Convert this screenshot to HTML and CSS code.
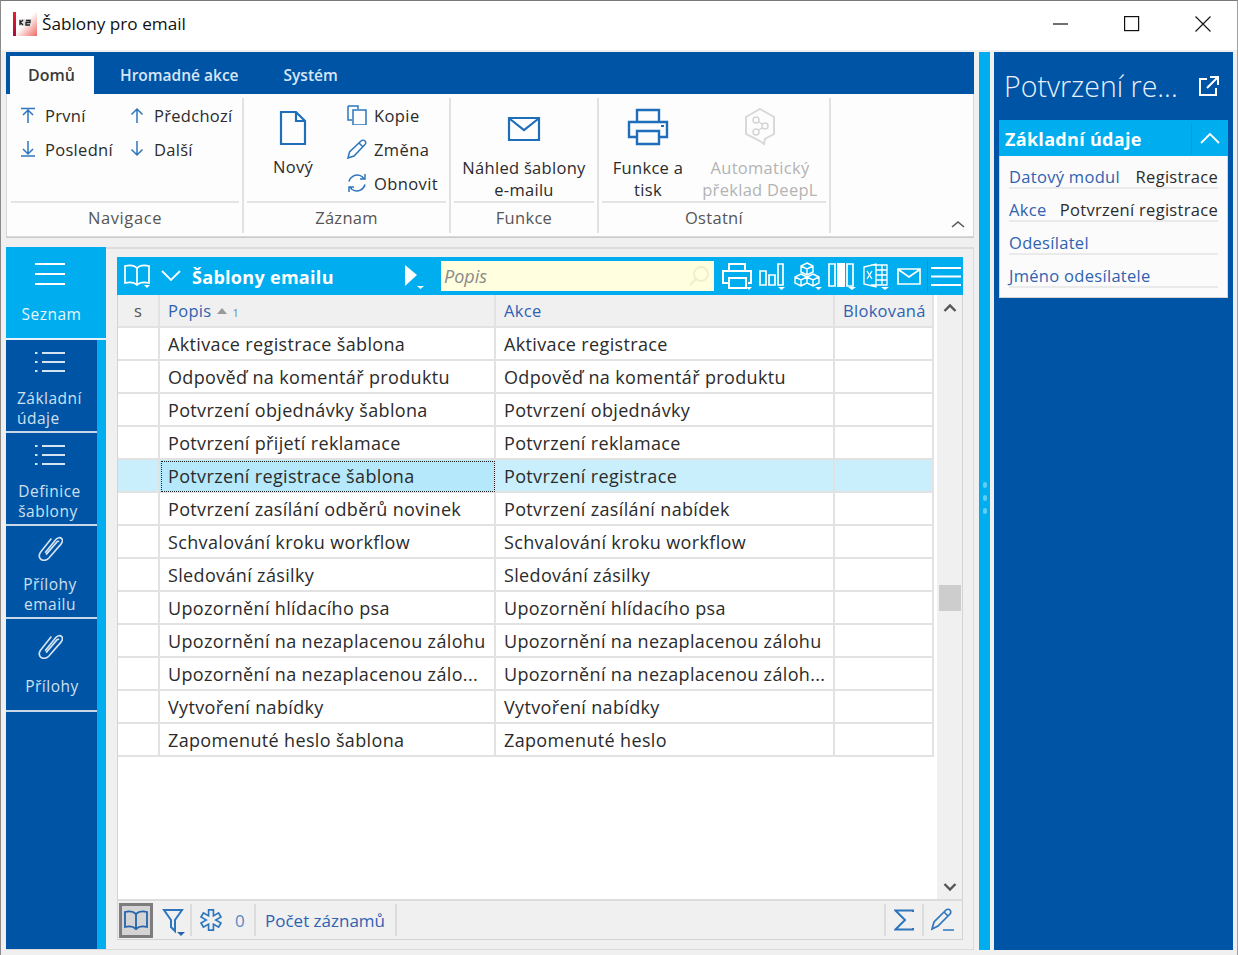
FILE: index.html
```html
<!DOCTYPE html>
<html lang="cs">
<head>
<meta charset="utf-8">
<title>Šablony pro email</title>
<link rel="stylesheet" href="styles.css">
</head>
<body>
<svg class="defs" width="0" height="0">
  <symbol id="clip" viewBox="0 0 28 30"><path d="M8 21 20 6c2-2.500 5-2.500 6.500-1s1 4-1 6.500L12 27c-3 3-7 3-9 1s-2-5 0-8L15 5M9 23 21 9c1-1.200 2-1.200 2.500-.5" fill="none" stroke="currentColor" stroke-width="1.800"/></symbol>
  <symbol id="list" viewBox="0 0 30 22"><path d="M0 2h2.500M7 2h23M0 11h2.500M7 11h23M0 20h2.500M7 20h23" fill="none" stroke="currentColor" stroke-width="2"/></symbol>
</svg>
<div class="window">
  <header class="titlebar">
    <svg class="logo" width="24" height="24" viewBox="0 0 24 24"><defs><linearGradient id="lg" x1="0" y1="0" x2="1" y2="1"><stop offset=".45" stop-color="#fff"/><stop offset="1" stop-color="#ef6a62"/></linearGradient><linearGradient id="lb" x1="0" y1="0" x2="0" y2="1"><stop offset="0" stop-color="#e8202a"/><stop offset="1" stop-color="#a80c3c"/></linearGradient></defs><rect x="2" width="22" height="24" fill="url(#lg)"/><rect width="3" height="24" fill="url(#lb)"/><rect x="6" y="7" width="13" height="7" fill="#e4dede"/><path d="M7 8v5M7.500 10.500 10 8M7.500 10.500 10 13M13 8.500h4v2h-4v2.500h4" fill="none" stroke="#222" stroke-width="1.300"/></svg>
    <span class="title">Šablony pro email</span>
    <div class="winctl">
      <svg width="16" height="16" viewBox="0 0 16 16"><path d="M0 8h15" stroke="#111" stroke-width="1.200"/></svg>
      <svg width="16" height="16" viewBox="0 0 16 16"><rect x=".6" y=".6" width="14" height="14" fill="none" stroke="#111" stroke-width="1.200"/></svg>
      <svg width="16" height="16" viewBox="0 0 16 16"><path d="M.5.500l15 15M15.500.500l-15 15" stroke="#111" stroke-width="1.100"/></svg>
    </div>
  </header>
  <div class="workspace">
    <main class="main">
      <section class="ribbon">
        <nav class="tabs"><span class="tab active">Domů</span><span class="tab">Hromadné akce</span><span class="tab">Systém</span></nav>
        <div class="groups">
          <div class="group g-nav">
            <div class="gbody nav-grid">
              <div class="sm"><svg width="18" height="18" viewBox="0 0 18 18"><path d="M2 2.500h14M9 17V4M4 9l5-5 5 5" fill="none" stroke="#2d75bd" stroke-width="1.500"/></svg><span>První</span></div>
              <div class="sm"><svg width="18" height="18" viewBox="0 0 18 18"><path d="M9 17V3M3.500 8.500 9 3l5.500 5.500" fill="none" stroke="#2d75bd" stroke-width="1.500"/></svg><span>Předchozí</span></div>
              <div class="sm"><svg width="18" height="18" viewBox="0 0 18 18"><path d="M2 16h14M9 1v13M4 9l5 5 5-5" fill="none" stroke="#2d75bd" stroke-width="1.500"/></svg><span>Poslední</span></div>
              <div class="sm"><svg width="18" height="18" viewBox="0 0 18 18"><path d="M9 1v14M3.500 9.500 9 15l5.500-5.500" fill="none" stroke="#2d75bd" stroke-width="1.500"/></svg><span>Další</span></div>
            </div>
            <div class="glabel">Navigace</div>
          </div>
          <div class="group g-rec">
            <div class="gbody rec">
              <div class="lg new"><svg width="28" height="36" viewBox="0 0 28 36"><path d="M2 2h15l9 9v23H2zM17 2v9h9" fill="none" stroke="#1f6ebc" stroke-width="2.200"/></svg><span>Nový</span></div>
              <div class="stack">
                <div class="sm"><svg width="20" height="20" viewBox="0 0 20 20"><path d="M1 1h10v3M1 1v14h4M6 5h13v15H6z" fill="none" stroke="#2d75bd" stroke-width="1.500"/></svg><span>Kopie</span></div>
                <div class="sm"><svg width="20" height="20" viewBox="0 0 20 20"><path d="M1 19l1.500-6L14 2c1-1 3-1 4 0s1 2.500 0 3.500L7 17zM12 4l4 4" fill="none" stroke="#2d75bd" stroke-width="1.500"/></svg><span>Změna</span></div>
                <div class="sm"><svg width="20" height="20" viewBox="0 0 20 20"><path d="M2 8.500C3 4 9-.5 15 3.500l2 2.500M18 1v5h-5M18 11.500C17 16 11 20.500 5 16.500L3 14M2 19v-5h5" fill="none" stroke="#2d75bd" stroke-width="1.500"/></svg><span>Obnovit</span></div>
              </div>
            </div>
            <div class="glabel">Záznam</div>
          </div>
          <div class="group g-fn">
            <div class="gbody center">
              <div class="lg"><svg width="34" height="26" viewBox="0 0 34 26"><path d="M2 2h30v22H2zM3 3l14 11L31 3" fill="none" stroke="#1f6ebc" stroke-width="2.200"/></svg><span>Náhled šablony<br>e-mailu</span></div>
            </div>
            <div class="glabel">Funkce</div>
          </div>
          <div class="group g-oth">
            <div class="gbody center oth">
              <div class="lg w-print"><svg width="42" height="38" viewBox="0 0 42 38"><path d="M10 14V2h22v12M9 29H2V14h38v15h-7M10 23h22v13H10z" fill="none" stroke="#1f6ebc" stroke-width="2.400"/><path d="M34 18h3" stroke="#1f6ebc" stroke-width="2"/></svg><span>Funkce a<br>tisk</span></div>
              <div class="lg w-deepl disabled"><svg width="32" height="38" viewBox="0 0 32 38"><path d="M16 1 30 9v17l-9 5-1 5-4-3-14-7V9z" fill="none" stroke="#d9d9d9" stroke-width="2"/><circle cx="12" cy="12" r="3" fill="none" stroke="#d5d5d5" stroke-width="1.500"/><circle cx="21" cy="18" r="3" fill="none" stroke="#d5d5d5" stroke-width="1.500"/><circle cx="12" cy="24" r="3" fill="none" stroke="#d5d5d5" stroke-width="1.500"/><path d="M15 14l3 2M18 20l-3 2" stroke="#d5d5d5" stroke-width="1.500"/></svg><span>Automatický<br>překlad DeepL</span></div>
            </div>
            <div class="glabel">Ostatní</div>
          </div>
          <div class="collapse"><svg width="14" height="8" viewBox="0 0 14 8"><path d="M1 7l6-5 6 5" fill="none" stroke="#555" stroke-width="1.500"/></svg></div>
        </div>
      </section>

      <section class="content">
        <aside class="sidenav">
          <div class="navitem current"><svg class="ham" width="30" height="24" viewBox="0 0 30 24"><path d="M0 2h30M0 12h30M0 22h30" stroke="#fff" stroke-width="2"/></svg><span>Seznam</span></div>
          <div class="navitem"><svg class="ic" width="30" height="22"><use href="#list"/></svg><span>Základní<br>údaje</span></div>
          <div class="navitem"><svg class="ic" width="30" height="22"><use href="#list"/></svg><span>Definice<br>šablony</span></div>
          <div class="navitem"><svg class="ic" width="25" height="27"><use href="#clip"/></svg><span>Přílohy<br>emailu</span></div>
          <div class="navitem"><svg class="ic" width="25" height="27"><use href="#clip"/></svg><span>Přílohy</span></div>
        </aside>
        <div class="panel">
          <div class="toolbar">
            <svg class="tb-book" width="28" height="26" viewBox="0 0 28 26"><path d="M14 5C11 2 6 2 2 3v17c4-1 9-1 12 2 3-3 8-3 12-2V3c-4-1-9-1-12 2zM14 5v17" fill="none" stroke="#fff" stroke-width="1.700"/><path d="M21 22h6l-3 3z" fill="#fff"/></svg>
            <svg class="tb-chev" width="20" height="12" viewBox="0 0 20 12"><path d="M1 1l9 9 9-9" fill="none" stroke="#fff" stroke-width="1.800"/></svg>
            <strong class="tb-title">Šablony emailu</strong>
            <div class="tb-play"><svg width="22" height="26" viewBox="0 0 22 26"><path d="M1 2l12 10L1 23z" fill="#fff"/><path d="M13 23h7l-3.500 3z" fill="#fff"/></svg></div>
            <div class="search"><em>Popis</em><svg width="22" height="22" viewBox="0 0 22 22"><circle cx="13" cy="9" r="7" fill="none" stroke="#eeeecb" stroke-width="1.800"/><path d="M8 14l-6 6" stroke="#eeeecb" stroke-width="2"/></svg></div>
            <div class="tb-icons">
              <svg width="30" height="28" viewBox="0 0 30 28"><path d="M7 9V2h16v7M6 21H1V9h28v12h-3M7 16h17v10H7z" fill="none" stroke="#fff" stroke-width="2"/><path d="M24 25h6l-3 3z" fill="#fff"/></svg>
              <svg class="nudge" width="28" height="28" viewBox="0 0 28 28"><path d="M1 9h6v14H1zM10 13h6v10h-6zM19 2h5v21h-5z" fill="none" stroke="#fff" stroke-width="1.700"/><path d="M19 25h7l-3.500 3z" fill="#fff"/></svg>
              <svg class="nudge" width="28" height="28" viewBox="0 0 28 28"><path d="M13 1l6 3v6l-6 3-6-3V4zM7 12l6 3v6l-6 3-6-3v-6zM19 12l6 3v6l-6 3-6-3v-6zM7 4l6 3 6-3M1 15l6 3 6-3 6 3 6-3M13 7v6M7 18v6M19 18v6" fill="none" stroke="#fff" stroke-width="1.400"/><path d="M21 25h7l-3.500 3z" fill="#fff"/></svg>
              <svg width="30" height="28" viewBox="0 0 30 28"><path d="M1 2h6v22H1zM19 2h6v22h-6z" fill="none" stroke="#fff" stroke-width="1.700"/><path d="M9 1h8v24H9z" fill="#fff"/><path d="M20 25h8l-4 3z" fill="#fff"/></svg>
              <svg class="pull" width="28" height="28" viewBox="0 0 28 28"><path d="M8 3h16v20H8M1 5l12-3v23L1 22zM13 8h11M13 13h11M13 18h11M19 3v20" fill="none" stroke="#fff" stroke-width="1.300"/><path d="M4 9l5 8M9 9l-5 8" stroke="#fff" stroke-width="1.300"/><path d="M18 25h8l-4 3z" fill="#fff"/></svg>
              <svg width="24" height="19" viewBox="0 0 24 19"><path d="M1 2h22v15H1zM2 3l10 7 10-7" fill="none" stroke="#fff" stroke-width="1.700"/></svg>
              <div class="tb-sep"></div>
              <svg class="tb-menu" width="30" height="21" viewBox="0 0 30 21"><path d="M0 2h30M0 10.500h30M0 19h30" stroke="#fff" stroke-width="1.800"/></svg>
            </div>
          </div>
          <div class="gridwrap">
            <div class="table">
              <div class="row head"><div class="c s">s</div><div class="c"><span>Popis</span><svg class="sort" width="10" height="6"><path d="M0 6L5 0l5 6z" fill="#999"/></svg><small>1</small></div><div class="c">Akce</div><div class="c">Blokovaná</div></div>
              <div class="row"><div class="c"></div><div class="c">Aktivace registrace šablona</div><div class="c">Aktivace registrace</div><div class="c"></div></div>
              <div class="row"><div class="c"></div><div class="c">Odpověď na komentář produktu</div><div class="c">Odpověď na komentář produktu</div><div class="c"></div></div>
              <div class="row"><div class="c"></div><div class="c">Potvrzení objednávky šablona</div><div class="c">Potvrzení objednávky</div><div class="c"></div></div>
              <div class="row"><div class="c"></div><div class="c">Potvrzení přijetí reklamace</div><div class="c">Potvrzení reklamace</div><div class="c"></div></div>
              <div class="row sel"><div class="c"></div><div class="c focus">Potvrzení registrace šablona</div><div class="c">Potvrzení registrace</div><div class="c"></div></div>
              <div class="row"><div class="c"></div><div class="c">Potvrzení zasílání odběrů novinek</div><div class="c">Potvrzení zasílání nabídek</div><div class="c"></div></div>
              <div class="row"><div class="c"></div><div class="c">Schvalování kroku workflow</div><div class="c">Schvalování kroku workflow</div><div class="c"></div></div>
              <div class="row"><div class="c"></div><div class="c">Sledování zásilky</div><div class="c">Sledování zásilky</div><div class="c"></div></div>
              <div class="row"><div class="c"></div><div class="c">Upozornění hlídacího psa</div><div class="c">Upozornění hlídacího psa</div><div class="c"></div></div>
              <div class="row"><div class="c"></div><div class="c">Upozornění na nezaplacenou zálohu</div><div class="c">Upozornění na nezaplacenou zálohu</div><div class="c"></div></div>
              <div class="row"><div class="c"></div><div class="c">Upozornění na nezaplacenou zálo...</div><div class="c">Upozornění na nezaplacenou záloh...</div><div class="c"></div></div>
              <div class="row"><div class="c"></div><div class="c">Vytvoření nabídky</div><div class="c">Vytvoření nabídky</div><div class="c"></div></div>
              <div class="row"><div class="c"></div><div class="c">Zapomenuté heslo šablona</div><div class="c">Zapomenuté heslo</div><div class="c"></div></div>
            </div>
            <div class="scrollbar">
              <svg width="14" height="10" viewBox="0 0 14 10"><path d="M1.500 8 7 2.500 12.500 8" fill="none" stroke="#555" stroke-width="2.400"/></svg>
              <div class="thumb"></div>
              <svg width="14" height="10" viewBox="0 0 14 10"><path d="M1.500 2 7 7.500 12.500 2" fill="none" stroke="#555" stroke-width="2.400"/></svg>
            </div>
          </div>
          <footer class="status">
            <div class="btn-on"><svg width="26" height="20" viewBox="0 0 26 20"><path d="M13 4C10 1 6 1 2 2v15c4-1 8-1 11 2 3-3 7-3 11-2V2c-4-1-8-1-11 2zM13 4v15" fill="none" stroke="#2464ad" stroke-width="1.800"/></svg></div>
            <div class="st filter"><svg width="24" height="28" viewBox="0 0 24 28"><path d="M2 2h18l-7 10v11l-4-4v-7z" fill="none" stroke="#2d75bd" stroke-width="2"/><path d="M15 24h8l-4 4z" fill="#2464ad"/></svg></div>
            <div class="st snow"><svg width="24" height="24" viewBox="0 0 24 24"><g stroke="#2d75bd" stroke-width="6.500"><path d="M12 1v22M2.500 6.500l19 11M2.500 17.500l19-11"/></g><g stroke="#f0f0f0" stroke-width="3.200"><path d="M12 2.800v18.400M4 7.400l16 9.200M4 16.600l16-9.200"/></g></svg><span class="zero">0</span></div>
            <div class="st count">Počet záznamů</div>
            <div class="spacer"></div>
            <div class="st sum"><svg width="20" height="22" viewBox="0 0 20 22"><path d="M19 3V1.500H1.500L11 11 1.500 20.500H19V19" fill="none" stroke="#2d75bd" stroke-width="2"/></svg></div>
            <div class="st pen"><svg width="24" height="24" viewBox="0 0 24 24"><path d="M1 21l2-7L15 2c1-1 3-1 4 0s1 3 0 4L7 18zM13 4l4 4M12 22h11" fill="none" stroke="#2d75bd" stroke-width="1.700"/></svg></div>
          </footer>
        </div>
      </section>
    </main>
    <div class="splitter"><i></i><i></i><i></i></div>
    <aside class="detail">
      <div class="d-head"><h1>Potvrzení re...</h1><svg width="22" height="22" viewBox="0 0 22 22"><path d="M9 4H2v16h16v-7M12 2h8v8M20 2 9 13" fill="none" stroke="#fff" stroke-width="2"/></svg></div>
      <div class="card">
        <div class="card-h"><strong>Základní údaje</strong><div class="card-t"><svg width="20" height="11" viewBox="0 0 20 11"><path d="M1 10l9-9 9 9" fill="none" stroke="#fff" stroke-width="1.800"/></svg></div></div>
        <div class="card-b">
          <div class="f"><a>Datový modul</a><span>Registrace</span></div>
          <div class="f"><a>Akce</a><span>Potvrzení registrace</span></div>
          <div class="f"><a>Odesílatel</a></div>
          <div class="f"><a>Jméno odesílatele</a></div>
        </div>
      </div>
    </aside>
  </div>
</div>
</body>
</html>
```
FILE: styles.css
```css
* { box-sizing: border-box; }
html, body { margin: 0; height: 100%; }
body { font-family: "Open Sans", "Noto Sans", sans-serif; font-size: 17px; color: #2b2b2b; overflow: hidden; background: #f0f0f0; }
.defs { display: block; height: 0; }
.window { width: 1238px; height: 955px; border-top: 1px solid #7a7a7a; border-left: 1px solid #8a8a8a; border-right: 1px solid #a0a0a0; display: flex; flex-direction: column; background: #f0f0f0; }

.titlebar { height: 49px; background: #fff; display: flex; align-items: center; padding: 0 0 4px 12px; flex: none; }
.logo { flex: none; margin-right: 5px; }
.title { font-size: 17.200px; color: #111; }
.winctl { margin-left: auto; display: flex; gap: 55px; padding-right: 26px; }

.workspace { flex: 1; display: flex; padding: 2px 4px 5px 5px; min-height: 0; }
.main { width: 968px; display: flex; flex-direction: column; flex: none; }

.ribbon { height: 185px; background: #fdfdfd; border: 1px solid #d8d8d8; border-top: 0; flex: none; display: flex; flex-direction: column; box-shadow: 0 1px 0 #ccc; }
.tabs { height: 42px; background: #0054a6; display: flex; align-items: flex-end; padding-left: 4px; flex: none; margin: 0 -1px; }
.tab { height: 38px; line-height: 38px; color: #d6e6f6; font-size: 15.500px; font-weight: 600; padding: 0 23px 0 23px; }
.tab:nth-child(2) { padding: 0 22px 0 26px; }
.tab.active { background: #fdfdfd; color: #3a3a3a; width: 84px; padding: 0 0 0 18px; font-size: 16px; }
.groups { flex: 1; display: flex; padding: 4px 0 3px 4px; min-height: 0; }
.group { display: flex; flex-direction: column; border-right: 2px solid #e2e2e2; padding-right: 3px; flex: none; }
.g-nav { width: 233px; }
.g-rec { width: 207px; padding-left: 3px; }
.g-fn { width: 148px; padding-left: 3px; }
.g-oth { width: 232px; padding-left: 3px; }
.gbody { height: 103px; flex: none; }
.glabel { flex: 1; border-top: 2px solid #e4e4e4; text-align: center; color: #555; font-size: 16.500px; letter-spacing: .3px; line-height: 29px; }
.g-nav .glabel { letter-spacing: .6px; }
.sm { display: flex; align-items: center; gap: 8px; height: 34px; font-size: 16.500px; letter-spacing: .3px; white-space: nowrap; }
.sm svg { flex: none; }
.nav-grid { display: grid; grid-template-columns: 109px 1fr; grid-auto-rows: 34px; padding-left: 8px; }
.rec { display: flex; padding-left: 25px; }
.lg { display: flex; flex-direction: column; align-items: center; text-align: center; font-size: 16.500px; letter-spacing: .3px; line-height: 22px; white-space: nowrap; }
.new { width: 42px; padding-top: 12px; gap: 10px; }
.stack { margin-left: 33px; }
.stack .sm { gap: 7px; letter-spacing: .4px; }
.center { display: flex; justify-content: center; padding-top: 18px; }
.oth { justify-content: flex-start; padding-top: 10px; gap: 0; }
.g-fn .lg svg { margin-bottom: 15px; }
.w-print { width: 92px; }
.w-print svg { margin-bottom: 11px; }
.w-deepl { width: 132px; }
.w-deepl svg { margin-bottom: 11px; }
.disabled { color: #b3b3b3; }
.collapse { margin-left: auto; align-self: flex-end; padding: 0 8px 5px 0; line-height: 0; }

.content { flex: 1; margin-top: 10px; display: flex; border: 1px solid #dcdcdc; border-left: 0; border-top-width: 2px; min-height: 0; }
.sidenav { width: 100px; flex: none; background: linear-gradient(to right, #0054a6 91px, #00aeef 91px); display: flex; flex-direction: column; margin-top: -2px; }
.navitem { height: 93px; display: flex; flex-direction: column; align-items: center; border-bottom: 2px solid #c8d8e8; width: 91px; color: #cfe0f1; font-size: 15.500px; letter-spacing: .5px; line-height: 20px; padding-top: 11px; flex: none; font-weight: 500; }
.navitem span { text-align: left; margin-left: -4px; }
.navitem .ic { color: #d5e4f3; flex: none; margin: 0 0 15px -3px; }
.navitem:nth-child(4) { padding-top: 8px; }
.navitem:nth-child(4) .ic { margin-bottom: 13px; }
.navitem:nth-child(4) span { text-align: center; margin-left: -3px; }
.navitem:nth-child(5) { padding-top: 13px; }
.navitem:nth-child(5) .ic { margin-bottom: 17px; }
.navitem:nth-child(5) span { margin-left: 1px; }
.navitem.current { width: 100px; background: #00aeef; color: #e6f6fd; padding: 15px 9px 0 0; border-bottom-color: #e8f0f8; }
.navitem.current span { margin-left: 0; }
.navitem.current .ham { margin: 0 0 18px -3px; }
.panel { margin: 8px 10px 9px 11px; flex: 1; min-width: 0; display: flex; flex-direction: column; border: 1px solid #d4d4d4; border-top: 0; }
.toolbar { height: 38px; flex: none; background: #00aeef; margin: 0 -1px; display: flex; align-items: center; padding-left: 6px; color: #fff; }
.tb-chev { margin-left: 10px; flex: none; }
.tb-title { margin: 1px 0 0 11px; font-size: 18px; letter-spacing: .3px; font-weight: 700; white-space: nowrap; width: 212px; }
.tb-play { width: 37px; line-height: 0; }
.search { width: 273px; height: 30px; background: #ffffe0; display: flex; align-items: center; justify-content: space-between; padding: 0 4px 0 3px; color: #8a8a8a; }
.search em { font-size: 18px; }
.tb-icons { display: flex; align-items: center; margin-left: 8px; gap: 6px; }
.tb-icons .nudge { margin-left: 1px; }
.tb-icons .pull { margin-left: -1px; }
.tb-sep { width: 1px; height: 30px; background: #0a95cc; }
.tb-menu { margin-left: -3px; }
.gridwrap { flex: 1; display: flex; min-height: 0; background: #fff; }
.table { width: 816px; flex: none; }
.row { display: grid; grid-template-columns: 42px 336px 339px 99px; height: 33px; }
.c { border-right: 2px solid #e2e2e2; border-bottom: 2px solid #e2e2e2; padding: 1px 0 0 8px; line-height: 31px; white-space: nowrap; overflow: hidden; font-size: 18px; letter-spacing: .35px; color: #2b2b2b; }
.head { height: 33px; background: #f0f0f0; }
.head .c { color: #2f62b0; font-size: 16.500px; letter-spacing: .3px; padding: 0 0 0 8px; }
.head .s { color: #555; text-align: center; padding-left: 0; }
.sort { margin: 0 5px 3px 6px; }
.head small { font-size: 11px; color: #5b87c5; }
.sel { background: #c8effb; }
.focus { background: #b5e8fb; outline: 1px dotted #222; outline-offset: -2px; }
.scrollbar { margin-left: 3px; flex: 1; background: #f0f0f0; display: flex; flex-direction: column; align-items: center; padding: 8px 1px 7px; justify-content: flex-start; }
.thumb { width: 22px; height: 26px; background: #cdcdcd; margin-top: 272px; }
.scrollbar svg:last-child { margin-top: auto; }
.status { height: 40px; flex: none; border-top: 2px solid #dcdcdc; background: #f0f0f0; display: flex; align-items: center; padding-left: 1px; color: #2f62b0; }
.btn-on { width: 34px; height: 35px; background: #d4d4d4; border: 3px solid #7d7d7d; display: flex; align-items: center; justify-content: center; }
.st { height: 32px; display: flex; align-items: center; border-right: 2px solid #dcdcdc; }
.filter { width: 39px; padding-left: 9px; }
.filter svg { margin-top: 4px; }
.snow { width: 64px; padding-left: 7px; gap: 12px; }
.zero { color: #5b87c5; font-size: 17px; }
.count { padding: 0 10px 0 9px; font-size: 17px; white-space: nowrap; }
.spacer { flex: 1; }
.sum { border-left: 2px solid #dcdcdc; width: 40px; justify-content: center; }
.pen { border-right: 0; width: 38px; justify-content: center; }

.splitter { width: 11px; margin: 0 4px 0 5px; background: #00aeef; flex: none; display: flex; flex-direction: column; align-items: center; justify-content: center; gap: 7px; padding-bottom: 6px; }
.splitter i { width: 4px; height: 6px; background: #60cdf5; border-radius: 2px; }
.detail { flex: 1; background: #0054a6; color: #fff; display: flex; flex-direction: column; min-width: 0; }
.d-head { height: 68px; display: flex; align-items: center; padding: 0 13px 0 10px; justify-content: space-between; flex: none; }
.d-head h1 { margin: 0; font-size: 28.500px; font-weight: 300; white-space: nowrap; color: #e8f1fa; }
.card { margin: 0 5px; background: #fbfbfb; border: 1px solid #d6d6d6; border-top: 0; height: 178px; flex: none; }
.card-h { height: 36px; margin: 0 -1px; background: #00aeef; display: flex; align-items: center; padding: 1px 0 0 6px; justify-content: space-between; }
.card-h strong { font-size: 18px; letter-spacing: .3px; font-weight: 700; }
.card-t { width: 37px; height: 30px; border-left: 1px solid #0a9bd6; display: flex; align-items: center; justify-content: center; }
.card-b { padding: 0 9px; }
.f { height: 33px; border-bottom: 2px solid #eaeaea; display: flex; justify-content: space-between; padding-top: 10px; line-height: 22px; font-size: 16.500px; letter-spacing: .3px; white-space: nowrap; }
.f a { color: #2f62b0; }
.f span { color: #2b2b2b; }
```
